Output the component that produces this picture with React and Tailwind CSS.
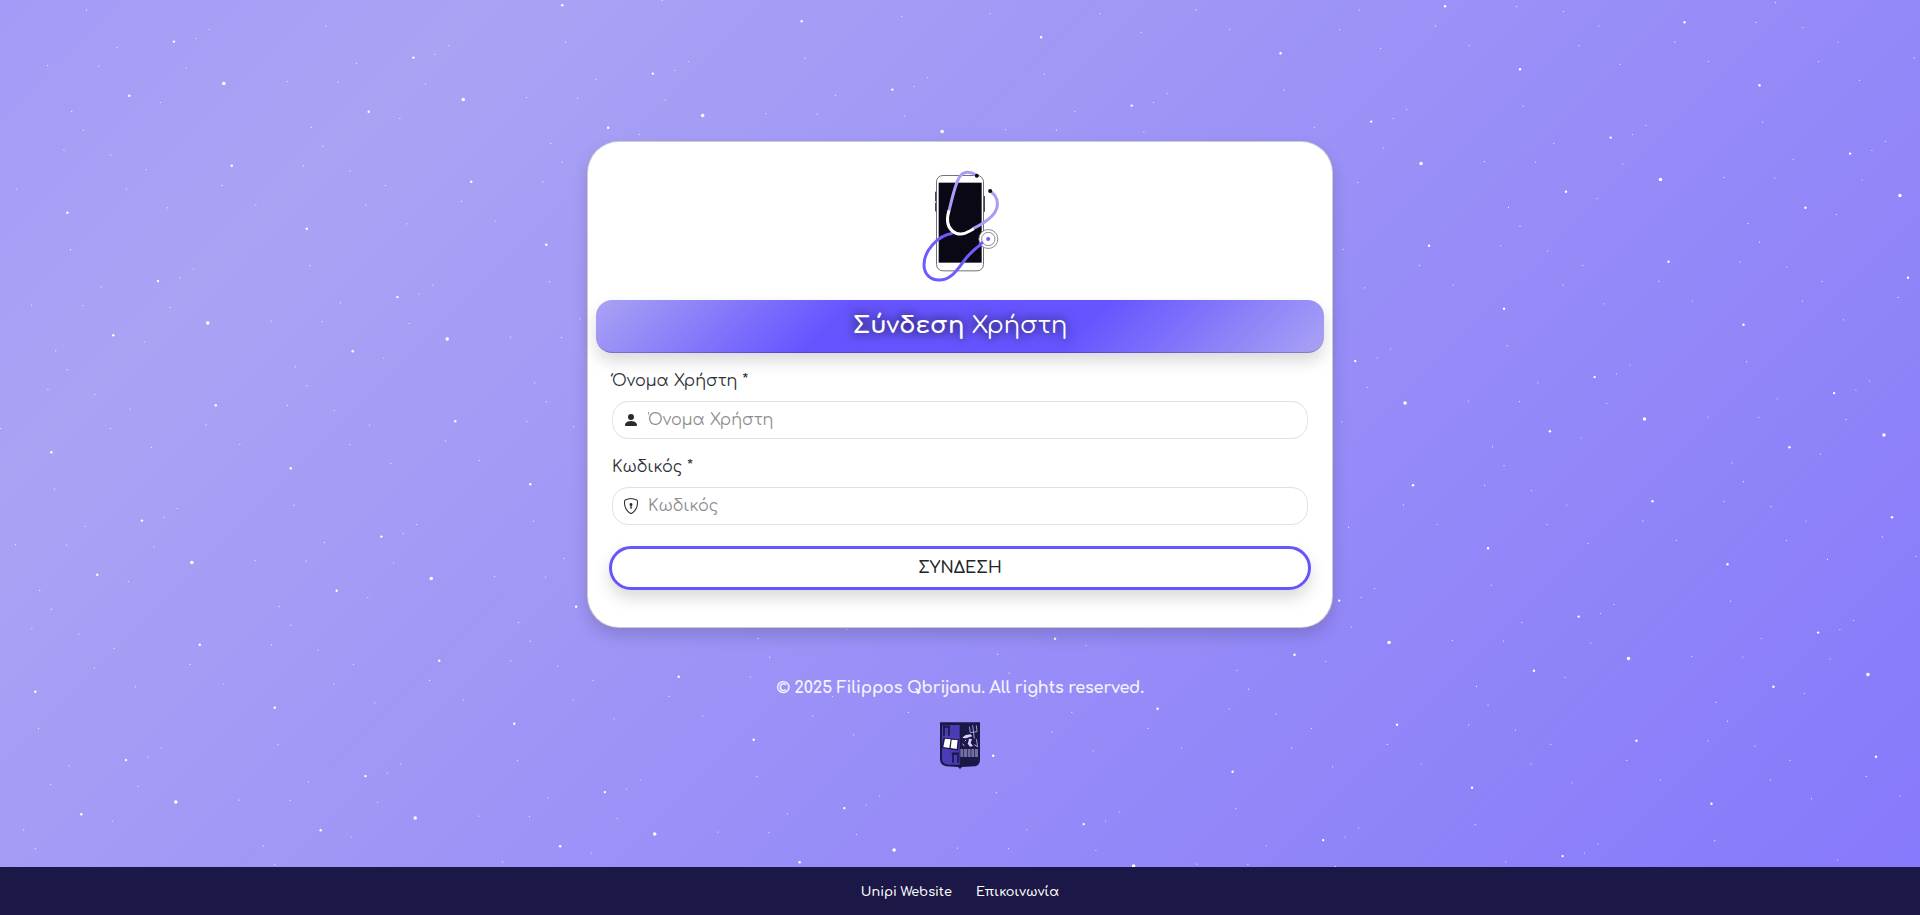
import { BsPersonFill, BsShieldLock } from "react-icons/bs";

// One 240px tile of the star field; [x, y, radius]
const STARS = [
  [223.8, 83.4, 1.75], [368.7, 111.8, 1.2], [231.8, 165.8, 1.2], [306.8, 228.8, 1.2], [397.4, 297.1, 1.2],
  [399.8, 118.5, 0.6], [311.2, 127.4, 0.6], [322.8, 146.2, 0.6], [303.4, 165.8, 0.6], [350.2, 171.1, 0.6],
  [385.5, 185.5, 0.6], [222.1, 185.4, 0.6], [255.8, 205, 0.6], [365.8, 205.1, 0.6], [406.8, 223.8, 0.6],
  [310, 265.7, 0.6], [432.8, 285, 0.6], [419.2, 294, 0.6], [340.5, 302.8, 0.6], [271.1, 321.1, 0.6],
  [322.1, 321.6, 0.6], [409.5, 323.5, 0.6],
];
const RANGE = [-2, -1, 0, 1, 2, 3, 4, 5, 6, 7];

function StarField() {
  return (
    <svg className="pointer-events-none absolute inset-0 h-full w-full" aria-hidden="true">
      {RANGE.flatMap((i) =>
        RANGE.map((j) => (
          <g key={i + "_" + j} transform={`translate(${i * 239.45 - j * 16} ${i * 16 + j * 239.5})`} fill="#fff">
            {STARS.map(([x, y, r], k) => (
              <circle key={k} cx={x} cy={y} r={r} fillOpacity={r < 1 ? 0.85 : 1} />
            ))}
          </g>
        ))
      )}
    </svg>
  );
}

function Logo() {
  return (
    <svg className="h-[135px] w-[120px]" viewBox="0 0 360 405" fill="none">
      <path d="M108 112v25M108 145v22M252 125v44" stroke="#24222f" strokeWidth="5" strokeLinecap="round" />
      <rect x="109.500" y="61.500" width="141" height="286" rx="19" fill="#fff" stroke="#55535f" strokeWidth="2.500" />
      <rect x="116" y="83" width="129" height="240" fill="#090814" />
      <path d="M158 235C112 242 72 288 72 329c0 28 19 46 45 46 32 0 50-23 74-56 20-28 37-41 58-56" stroke="#6c5cff" strokeWidth="9" />
      <circle cx="265" cy="252" r="28.500" fill="#fff" stroke="#77747f" strokeWidth="2.500" />
      <circle cx="265" cy="252" r="20" fill="#fff" stroke="#77747f" strokeWidth="2.500" />
      <path d="M238 268l11-6" stroke="#6c5cff" strokeWidth="9" />
      <circle cx="264.500" cy="252" r="6" fill="#6c5cff" />
      <path d="M147 168c8-32 15-67 27-93 10-25 31-30 56-14" stroke="#a79ef8" strokeWidth="9" />
      <path d="M270 108c28 18 29 51 6 75-17 17-36 28-57 38" stroke="#a79ef8" strokeWidth="9" />
      <path d="M147 166c-9 30-5 49 10 62 20 17 40 8 64-7" stroke="#fff" strokeWidth="9" />
      <circle cx="230.500" cy="62" r="6" fill="#090814" />
      <circle cx="270.500" cy="108" r="6" fill="#090814" />
    </svg>
  );
}

function Crest() {
  return (
    <svg className="h-[47px] w-[40px]" viewBox="0 0 120 141" fill="none">
      <path d="M0 1h120v112q0 16-15 20l-39 2-6 6-6-6-36-2Q0 128 0 112z" fill="#1b1746" />
      <path d="M6 9h53v119H23Q6 126 6 110z" fill="#4a3cb5" />
      <path d="M12 41V15h15v26M39 122V96h15v26M8 13h22M35 94h22" stroke="#1b1746" strokeWidth="5" />
      <path d="M10 47l48 5-4 34-48-8z" fill="#1b1746" />
      <path d="M15 50l17 2-4 26-18-3zM35 53l18 1-3 27-18-3z" fill="#fff" />
      <path d="M88 14l3 18 20-3-2-19M98 10l5 40M109 51l4 24" stroke="#b9b1f6" strokeWidth="2.500" />
      <path d="M68 46l9-7 15-2 5 6-10 3-9 3-9-1zM87 50l9 1-4 12 7 9-9 2-7-9 2-6z" fill="#d7d2fb" />
      <path d="M68 65l5 7M78 54l-4 4M103 68l9 6" stroke="#b9b1f6" strokeWidth="3" />
      <path d="M61 84h54M61 90h54M61 96h54M61 102h54" stroke="#cbc5fa" strokeWidth="3" strokeDasharray="9 2" />
    </svg>
  );
}

function Field({ label, name, type, Icon }) {
  return (
    <div className="flex flex-col">
      <label htmlFor={name} className="h-6 whitespace-nowrap text-[16px] font-normal leading-6 text-[#2c3034]">
        {label} *
      </label>
      <div className="mt-2 flex h-[38px] items-center rounded-[16px] border border-[#dee2e6] bg-white pl-[10px]">
        <Icon className="h-4 w-4 shrink-0 text-[#2b2b2e]" />
        <input
          id={name}
          type={type}
          placeholder={label}
          className="ml-[9px] w-full bg-transparent text-[16px] font-normal text-[#212529] outline-none placeholder:text-[#8c8e91]"
        />
      </div>
    </div>
  );
}

export default function App() {
  return (
    <div className="relative flex h-[915px] w-full flex-col overflow-hidden bg-[linear-gradient(135deg,#a39bf7_0px,#aaa3f4_340px,#8678fb_2005px)] font-['Comfortaa','Inter','Noto_Sans',sans-serif]">
      <StarField />
      <main className="relative flex flex-1 flex-col items-center pt-[141px]">
        <section className="flex h-[487px] w-[746px] flex-col rounded-[32px] border border-black/20 bg-white px-2 pt-[13px] shadow-[0_8px_16px_rgba(0,0,0,0.15)]">
          <div className="flex justify-center">
            <Logo />
          </div>
          <h1 className="mt-[10px] flex h-[53px] items-center justify-center rounded-[16px] border-b border-black/20 bg-[linear-gradient(135deg,#aaa3f4_0%,#6655ff_33%,#6655ff_66%,#aaa3f4_100%)] bg-origin-border text-[24px] font-normal text-white shadow-[0_8px_16px_rgba(0,0,0,0.15)] [text-shadow:0_0_12px_rgba(0,0,0,1)]">
            <span className="whitespace-nowrap">
              <b className="font-bold">Σύνδεση</b> Χρήστη
            </span>
          </h1>
          <form className="flex flex-col px-4 pt-4" onSubmit={(e) => e.preventDefault()}>
            <Field label="Όνομα Χρήστη" name="username" type="text" Icon={BsPersonFill} />
            <div className="h-4" />
            <Field label="Κωδικός" name="password" type="password" Icon={BsShieldLock} />
            <button className="-mx-[3px] mt-[21px] h-[44px] rounded-[22px] border-[3px] border-[#6655ff] bg-white text-[16px] font-semibold tracking-[0.1px] text-[#212529] shadow-[0_8px_16px_rgba(0,0,0,0.15)]">
              ΣΥΝΔΕΣΗ
            </button>
          </form>
        </section>
        <p className="mt-[48px] h-6 whitespace-nowrap text-[16px] font-bold leading-6 tracking-[-0.1px] text-[#f5f3ff]">
          © 2025 Filippos Qbrijanu. All rights reserved.
        </p>
        <div className="mt-[22px]">
          <Crest />
        </div>
      </main>
      <footer className="relative flex h-[48px] items-center justify-center gap-6 bg-[#1b1746] pt-[3px] text-[12.8px] font-semibold text-white">
        <a className="whitespace-nowrap">Unipi Website</a>
        <a className="whitespace-nowrap">Επικοινωνία</a>
      </footer>
    </div>
  );
}
